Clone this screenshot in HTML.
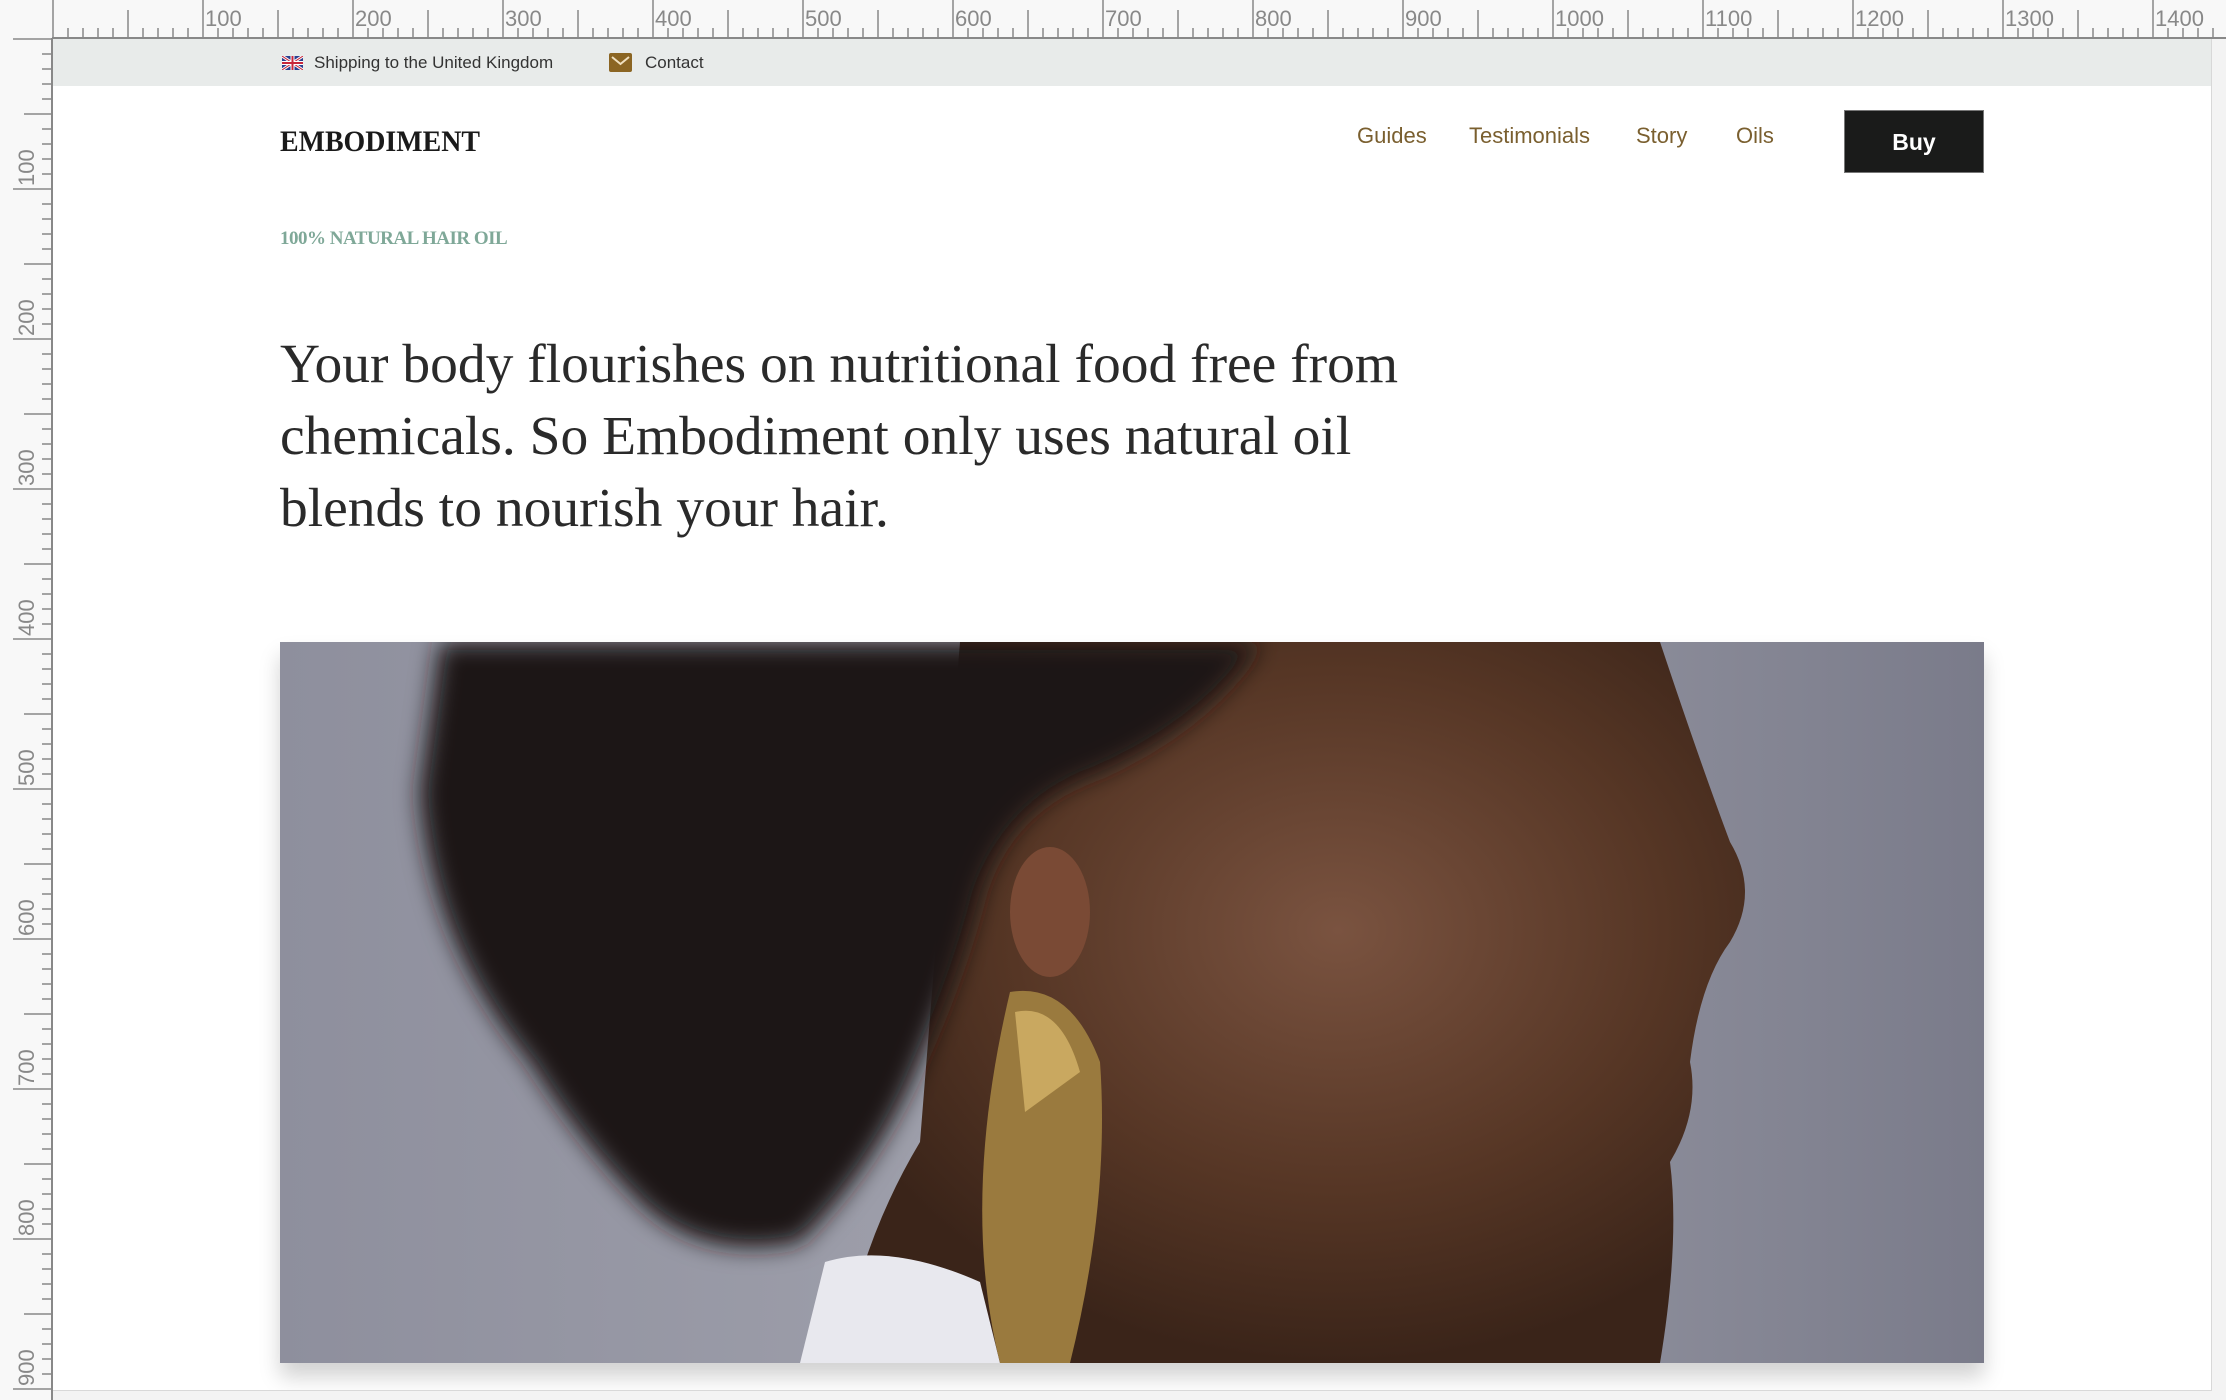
<!DOCTYPE html>
<html><head><meta charset="utf-8"><style>
*{margin:0;padding:0;box-sizing:border-box}
body{width:2226px;height:1400px;background:#f3f3f3;position:relative;overflow:hidden;font-family:"Liberation Sans",sans-serif}
.page{position:absolute;left:53px;top:39px;width:2159px;height:1352px;background:#fff;border-right:1px solid #d8d8d8;border-bottom:1px solid #d8d8d8;overflow:hidden}
.topbar{position:absolute;left:0;top:0;width:100%;height:47px;background:#e8ebea}
.tb{position:absolute;top:14px;font-size:17px;color:#333}
.logo{position:absolute;left:227px;top:86px;font-family:"Liberation Serif",serif;font-weight:bold;font-size:30px;color:#1a1a1a;transform:scaleX(0.93);transform-origin:left}
.nav{position:absolute;top:84px;font-size:22px;color:#7a5f2f}
.buy{position:absolute;left:1791px;top:71px;width:140px;height:63px;background:#1a1b1a;color:#fff;font-weight:bold;font-size:23px;text-align:center;line-height:63px;border:1px solid #777}
.kicker{position:absolute;left:227px;top:189px;font-family:"Liberation Serif",serif;font-weight:bold;font-size:19px;color:#7fa898;transform:scaleX(1.0);transform-origin:left;letter-spacing:-0.5px}
.head{position:absolute;left:227px;top:290px;font-family:"Liberation Serif",serif;font-size:55.5px;line-height:72px;color:#2a2a2a;white-space:nowrap}
.img{position:absolute;left:227px;top:603px;width:1704px;height:721px;box-shadow:0 14px 20px rgba(0,0,0,0.18)}
</style></head><body>
<svg style="position:absolute;left:0;top:0" width="2226" height="1400">
<rect x="0" y="0" width="2226" height="39" fill="#f8f8f8"/>
<rect x="0" y="39" width="52" height="1361" fill="#f8f8f8"/>
<line x1="52" y1="38" x2="2226" y2="38" stroke="#888" stroke-width="2"/>
<line x1="52" y1="38" x2="52" y2="1400" stroke="#888" stroke-width="2"/>
<g stroke="#888" stroke-width="1.5" id="h"></g>
<g font-family="Liberation Sans" font-size="22" fill="#888" id="hl"></g>
</svg>
<div class="page">
<div class="topbar">
<svg style="position:absolute;left:229px;top:17px" width="21" height="14"><rect width="21" height="14" fill="#2a3f8f"/><path d="M0 0L21 14M21 0L0 14" stroke="#fff" stroke-width="3"/><path d="M0 0L21 14M21 0L0 14" stroke="#c8263a" stroke-width="1"/><path d="M10.5 0V14M0 7H21" stroke="#fff" stroke-width="4"/><path d="M10.5 0V14M0 7H21" stroke="#c8263a" stroke-width="2"/></svg>
<div class="tb" style="left:261px">Shipping to the United Kingdom</div>
<svg style="position:absolute;left:556px;top:14px" width="23" height="19"><rect width="23" height="19" rx="2" fill="#8b6523"/><path d="M3 4L11.5 11L20 4" stroke="#f0e0c0" stroke-width="2" fill="none"/></svg>
<div class="tb" style="left:592px">Contact</div>
</div>
<div class="logo">EMBODIMENT</div>
<div class="nav" style="left:1304px">Guides</div>
<div class="nav" style="left:1416px">Testimonials</div>
<div class="nav" style="left:1583px">Story</div>
<div class="nav" style="left:1683px">Oils</div>
<div class="buy">Buy</div>
<div class="kicker">100% NATURAL HAIR OIL</div>
<div class="head">Your body flourishes on nutritional food free from<br>chemicals. So Embodiment only uses natural oil<br>blends to nourish your hair.</div>
<div class="img"><svg width="1704" height="721">
<defs>
<linearGradient id="bg" x1="0" x2="1"><stop offset="0" stop-color="#8e8f9d"/><stop offset="0.5" stop-color="#a2a3ae"/><stop offset="1" stop-color="#7a7b8a"/></linearGradient>
<radialGradient id="face" cx="0.55" cy="0.4" r="0.6"><stop offset="0" stop-color="#7a5340"/><stop offset="0.6" stop-color="#563625"/><stop offset="1" stop-color="#3a2419"/></radialGradient>
<filter id="blur"><feGaussianBlur stdDeviation="12"/></filter>
</defs>
<rect width="1704" height="721" fill="url(#bg)"/>
<path d="M680 0 L1380 0 Q1420 120 1450 200 Q1480 250 1450 300 Q1420 340 1410 420 Q1420 470 1390 520 Q1400 600 1380 721 L560 721 Q580 600 640 500 Z" fill="url(#face)"/>
<g filter="url(#blur)" fill="#1a1817">
<path d="M160 0 L980 0 Q930 80 820 130 Q730 160 700 250 Q680 330 640 420 Q600 520 520 600 Q420 620 360 560 Q300 500 250 420 Q150 300 140 150 Z"/>
</g>
<path d="M545 620 Q610 600 700 640 L720 721 L520 721 Z" fill="#e8e8ee"/>
<path d="M730 350 Q790 340 820 420 Q830 560 790 721 L720 721 Q680 560 730 350Z" fill="#9a7a3e"/>
<path d="M735 370 Q780 360 800 430 L745 470Z" fill="#c9a860"/>
<ellipse cx="770" cy="270" rx="40" ry="65" fill="#7a4a35"/>
</svg></div>
</div>
<script>
var g=document.getElementById('h'),l=document.getElementById('hl'),ns='http://www.w3.org/2000/svg';
for(var i=0;i<=145;i++){var x=53+i*15;var len=i%10==0?39:(i%5==0?28:10);var e=document.createElementNS(ns,'line');e.setAttribute('x1',x);e.setAttribute('x2',x);e.setAttribute('y1',38);e.setAttribute('y2',38-len);g.appendChild(e);
if(i%10==0&&i>0){var t=document.createElementNS(ns,'text');t.setAttribute('x',x+2);t.setAttribute('y',26);t.textContent=i*10;l.appendChild(t);}}
for(var i=0;i<=91;i++){var y=39+i*15;var len=i%10==0?39:(i%5==0?28:10);var e=document.createElementNS(ns,'line');e.setAttribute('y1',y);e.setAttribute('y2',y);e.setAttribute('x1',52);e.setAttribute('x2',52-len);g.appendChild(e);
if(i%10==0&&i>0){var t=document.createElementNS(ns,'text');t.setAttribute('transform','translate(34,'+(y-3)+') rotate(-90)');t.textContent=i*10;l.appendChild(t);}}
</script>
</body></html>
